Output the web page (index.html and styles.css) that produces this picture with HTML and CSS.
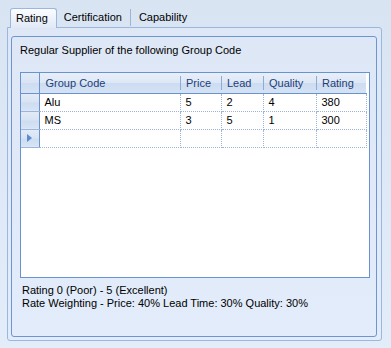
FILE: index.html
```html
<!DOCTYPE html>
<html lang="en">
<head>
  <meta charset="UTF-8">
  <title>Supplier Rating</title>
  <link rel="stylesheet" href="styles.css">
</head>
<body>
  <div class="tabs">
    <div class="tab active">Rating</div>
    <div class="tab">Certification</div>
    <div class="tab">Capability</div>
  </div>

  <div class="tab-page">
    <div class="group-box">
      <div class="group-title">Regular Supplier of the following Group Code</div>

      <div class="grid">
        <table>
          <colgroup>
            <col class="c-row">
            <col class="c-code">
            <col class="c-price">
            <col class="c-lead">
            <col class="c-quality">
            <col class="c-rating">
          </colgroup>
          <thead>
            <tr>
              <th class="row-head"></th>
              <th><span>Group Code</span></th>
              <th><span>Price</span></th>
              <th><span>Lead</span></th>
              <th><span>Quality</span></th>
              <th><span>Rating</span></th>
            </tr>
          </thead>
          <tbody>
            <tr>
              <td class="row-head"></td>
              <td>Alu</td><td>5</td><td>2</td><td>4</td><td>380</td>
            </tr>
            <tr>
              <td class="row-head"></td>
              <td>MS</td><td>3</td><td>5</td><td>1</td><td>300</td>
            </tr>
            <tr>
              <td class="row-head"><span class="arrow"></span></td>
              <td></td><td></td><td></td><td></td><td></td>
            </tr>
          </tbody>
        </table>
      </div>

      <div class="notes">
        <p>Rating 0 (Poor) - 5 (Excellent)</p>
        <p>Rate Weighting - Price: 40% Lead Time: 30% Quality: 30%</p>
      </div>
    </div>
  </div>
</body>
</html>
```

FILE: styles.css
```css
* {
  box-sizing: border-box;
}
body {
  margin: 0;
  width: 391px;
  height: 348px;
  overflow: hidden;
  font-family: "Liberation Sans", Arial, sans-serif;
  font-size: 11px;
  color: #000;
  background: linear-gradient(#d9e4f3, #e3edfa);
}

/* tab strip */
.tabs {
  display: flex;
  height: 28px;
  padding: 8px 0 0 10px;
}
.tab {
  margin-top: 1px;
  height: 17px;
  line-height: 17px;
  padding: 0 8px 0 7px;
  border-right: 1px solid #9fb4d4;
}
.tab:last-child {
  border-right: none;
  padding-left: 8px;
}
.tab.active {
  margin-top: 0;
  height: 20px;
  line-height: 19px;
  padding: 0 8px 0 5px;
  border: 1px solid #9bb7df;
  border-bottom: none;
  border-radius: 3px 3px 0 0;
  background: linear-gradient(#fbfcfe, #e0e9f7);
  position: relative;
  z-index: 1;
}

/* tab page */
.tab-page {
  margin: -1px 0 0 7px;
  width: 375px;
  height: 314px;
  border: 1px solid #9cb6de;
  border-radius: 0 3px 3px 3px;
  background: linear-gradient(#dde7f5, #e2ecfa);
  padding: 8px 4px 3px 3px;
}

.group-box {
  height: 301px;
  border: 1px solid #6d95d2;
  border-radius: 3px;
  padding: 7px 6px 0 8px;
}
.group-title {
  line-height: 13px;
}

/* data grid */
.grid {
  margin-top: 15px;
  width: 350px;
  height: 206px;
  border: 1px solid #6a92d0;
  background: #fff;
}
table {
  border-collapse: collapse;
  table-layout: fixed;
  width: 345px;
}
.c-row { width: 18px; }
.c-code { width: 141px; }
.c-price { width: 41px; }
.c-lead { width: 42px; }
.c-quality { width: 53px; }
.c-rating { width: 50px; }

th {
  height: 20px;
  padding: 0;
  font-weight: normal;
  text-align: left;
  color: #1e3d78;
  background: linear-gradient(#e8eff9 0%, #dde7f5 50%, #ccdcf1 52%, #d5e2f4 100%);
  border-bottom: 1px solid #6a92d0;
}
th span {
  display: block;
  padding-left: 5px;
  border-left: 1px solid #8eaad6;
  line-height: 14px;
}
th:nth-child(2) span {
  border-left: none;
  padding-left: 6px;
}
td {
  height: 18px;
  padding: 0 0 0 5px;
  border-right: 1px dotted #9db5dc;
  border-bottom: 1px dotted #9db5dc;
  line-height: 17px;
  white-space: nowrap;
}
.row-head {
  padding: 0;
  border-right: 1px solid #6a92d0;
  background: linear-gradient(#e3ebf7 0%, #d8e3f3 50%, #cddcf1 52%, #d6e3f4 100%);
}
td.row-head {
  border-bottom: 1px solid #9ab5de;
}
.arrow {
  display: block;
  width: 0;
  height: 0;
  margin-left: 6px;
  border-top: 4px solid transparent;
  border-bottom: 4px solid transparent;
  border-left: 5px solid #5c8bd0;
}

/* legend under grid */
.notes {
  margin-top: 6px;
  padding-left: 2px;
}
.notes p {
  margin: 0;
  line-height: 13px;
}
```
